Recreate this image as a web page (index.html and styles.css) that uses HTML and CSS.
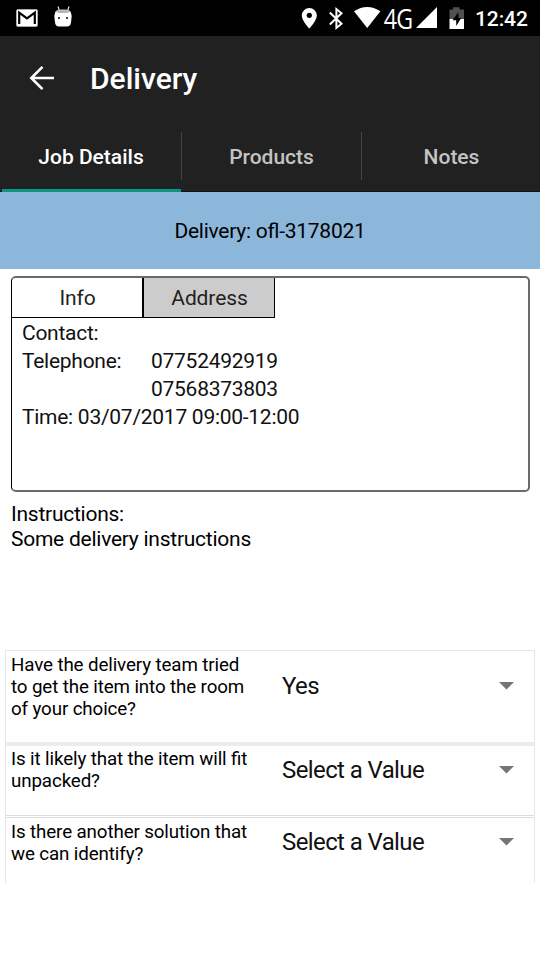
FILE: index.html
```html
<!DOCTYPE html>
<html lang="en">
<head>
<meta charset="utf-8">
<title>Delivery</title>
<link rel="stylesheet" href="styles.css">
</head>
<body>
<div class="status">
  <svg class="status-left" width="90" height="36" viewBox="0 0 90 36">
    <rect x="16.5" y="9.5" width="21" height="17" rx="1.5" fill="#fff" stroke="#aaa"/>
    <path d="M19.2 24V12.7L27 18.3l7.8-5.600V24" fill="none" stroke="#000" stroke-width="2.200"/>
    <path d="M58 6.500l1.300 4M69 6.500l-1.300 4" stroke="#ddd" stroke-width="1.200"/>
    <path d="M55 13q0-3.500 8-3.500t8 3.500l.7 3-.7 6.500q-.5 4-4 4h-8q-3.500 0-4-4l-.7-6.500z" fill="#fff"/>
    <ellipse cx="63" cy="11.500" rx="7" ry="1.600" fill="#b5b5b5"/>
    <circle cx="59" cy="18" r="1" fill="#000"/><circle cx="67" cy="18" r="1" fill="#000"/>
  </svg>
  <div class="status-right">
    <svg width="93" height="36" viewBox="290 0 93 36">
      <path d="M309.300 8a7.500 7.500 0 0 0-7.500 7.500c0 5.500 7.500 13 7.500 13s7.500-7.500 7.500-13a7.500 7.500 0 0 0-7.500-7.500z" fill="#fff"/>
      <circle cx="309.300" cy="15.300" r="2.600" fill="#000"/>
      <path d="M329.800 12.500L341.500 23.800 336.400 28V9l5.100 4.200-11.700 11.300" fill="none" stroke="#fff" stroke-width="2"/>
      <path d="M354 11.200q13.200-8.600 26.400 0L367.200 28z" fill="#fff"/>
    </svg>
    <span class="network">4G</span>
    <svg width="59" height="36" viewBox="414 0 59 36">
      <path d="M437 7v21h-21z" fill="#fff"/>
      <path d="M449.500 9.500h3.500V7.300h6.500v2.200h4.500V19h-14.500z" fill="#505050"/>
      <path d="M449.500 19H464v10h-14.500z" fill="#fff"/>
      <path d="M458.500 12l-6 8.200h3.700V26l5-8h-2.700z" fill="#000"/>
    </svg>
    <span class="clock">12:42</span>
  </div>
</div>
<header class="appbar">
  <svg class="back" width="26" height="26" viewBox="0 0 26 26"><path d="M25 13H2.500M13.500 1.800L2.300 13l11.200 11.200" fill="none" stroke="#fff" stroke-width="2.600"/></svg>
  <h1>Delivery</h1>
</header>
<nav class="tabs">
  <div class="tab active">Job Details</div>
  <div class="tab">Products</div>
  <div class="tab">Notes</div>
</nav>
<div class="banner">Delivery: ofl-3178021</div>
<section class="card">
  <div class="card-tabs"><div class="card-tab">Info</div><div class="card-tab off">Address</div></div>
  <div class="details">
    <div class="line">Contact:</div>
    <div class="line"><span class="key">Telephone:</span><span>07752492919</span></div>
    <div class="line"><span class="key"></span><span>07568373803</span></div>
    <div class="line">Time: 03/07/2017 09:00-12:00</div>
  </div>
</section>
<section class="instructions">Instructions:<br>Some delivery instructions</section>
<section class="questions">
  <div class="row first">
    <div class="question">Have the delivery team tried<br>to get the item into the room<br>of your choice?</div>
    <div class="select"><span>Yes</span><svg width="15" height="8" viewBox="0 0 15 8"><path d="M0 0h15L7.500 7.500z" fill="#757575"/></svg></div>
  </div>
  <div class="row second">
    <div class="question">Is it likely that the item will fit<br>unpacked?</div>
    <div class="select"><span>Select a Value</span><svg width="15" height="8" viewBox="0 0 15 8"><path d="M0 0h15L7.500 7.500z" fill="#757575"/></svg></div>
  </div>
  <div class="row third">
    <div class="question">Is there another solution that<br>we can identify?</div>
    <div class="select"><span>Select a Value</span><svg width="15" height="8" viewBox="0 0 15 8"><path d="M0 0h15L7.500 7.500z" fill="#757575"/></svg></div>
  </div>
</section>
</body>
</html>
```
FILE: styles.css
```css
* { box-sizing: border-box; }
body { margin: 0; width: 540px; height: 960px; overflow: hidden; background: #fff; color: #111; font: 21px/1.172 Roboto, sans-serif; font-feature-settings: "liga" 1; }
svg { display: block; flex: none; }
.status { height: 36px; background: #000; color: #fff; display: flex; justify-content: space-between; }
.status-right { display: flex; width: 250px; line-height: 36px; }
.network { width: 31px; padding-left: 1px; font: 27px/37px "Open Sans", sans-serif; }
.network { transform: scaleX(.86); transform-origin: left; white-space: nowrap; letter-spacing: -1px; }
.clock { width: 67px; padding-left: 2px; padding-top: 1px; font-size: 21px; font-weight: 500; white-space: nowrap; letter-spacing: -.1px; }
.appbar { height: 84px; background: #212121; display: flex; align-items: center; padding-left: 29px; }
.appbar h1 { margin: 2px 0 0 35px; color: #fff; font-size: 30px; font-weight: 500; line-height: 36px; }
.tabs { height: 72px; background: #212121; border-bottom: 1px solid #111; display: grid; grid-template-columns: 181px 180px 179px; }
.tab { position: relative; height: 72px; padding-left: 1px; line-height: 75px; text-align: center; color: #c4c4c4; font-weight: 500; }
.tab:last-child { padding-left: 2px; }
.tab + .tab::before { content: ""; position: absolute; left: 0; top: 12px; width: 1px; height: 48px; background: #444; }
.tab.active { color: #fff; }
.tab.active::after { content: ""; position: absolute; left: 2px; right: 0; bottom: 0; height: 3px; background: #0a9585; }
.banner { height: 77px; background: #8cb7da; color: #000; line-height: 79px; text-align: center; letter-spacing: -.25px; }
.card { margin: 7px 10px 0 11px; height: 216px; border: 2px solid #6a6a6a; border-left: 1px solid #000; border-radius: 5px; }
.card-tabs { display: flex; height: 40px; color: #222; }
.card-tab { width: 132px; padding-left: 1px; border-right: 2px solid #000; border-bottom: 1px solid #000; line-height: 40px; text-align: center; letter-spacing: -.1px; }
.card-tab.off { width: 131px; border-right-width: 1px; background: #ccc; }
.details { padding: 1px 0 0 10px; letter-spacing: -.27px; }
.line { height: 28px; line-height: 28px; display: flex; white-space: pre; }
.key { width: 129px; }
.instructions { margin: 10px 11px 0; height: 148px; color: #000; line-height: 24.6px; letter-spacing: -.25px; }
.questions { margin: 0 5px; border: 1px solid #e6e6e6; border-bottom: 0; height: 233px; }
.row { display: flex; color: #000; }
.question { width: 276px; padding: 3px 0 0 5px; font-size: 18.75px; line-height: 22px; white-space: nowrap; letter-spacing: -.12px; }
.select { flex: 1; display: flex; justify-content: space-between; align-items: center; padding-right: 20px; height: 28px; font-size: 24px; line-height: 28px; color: #111; letter-spacing: -.6px; }
.first { height: 95px; border-bottom: 4px solid #ececec; }
.first .select { margin-top: 21px; }
.second { height: 72px; border-bottom: 3px double #ddd; }
.second .question { padding-top: 2px; }
.second .select { margin-top: 10px; }
.third .select { margin-top: 10px; }
```
